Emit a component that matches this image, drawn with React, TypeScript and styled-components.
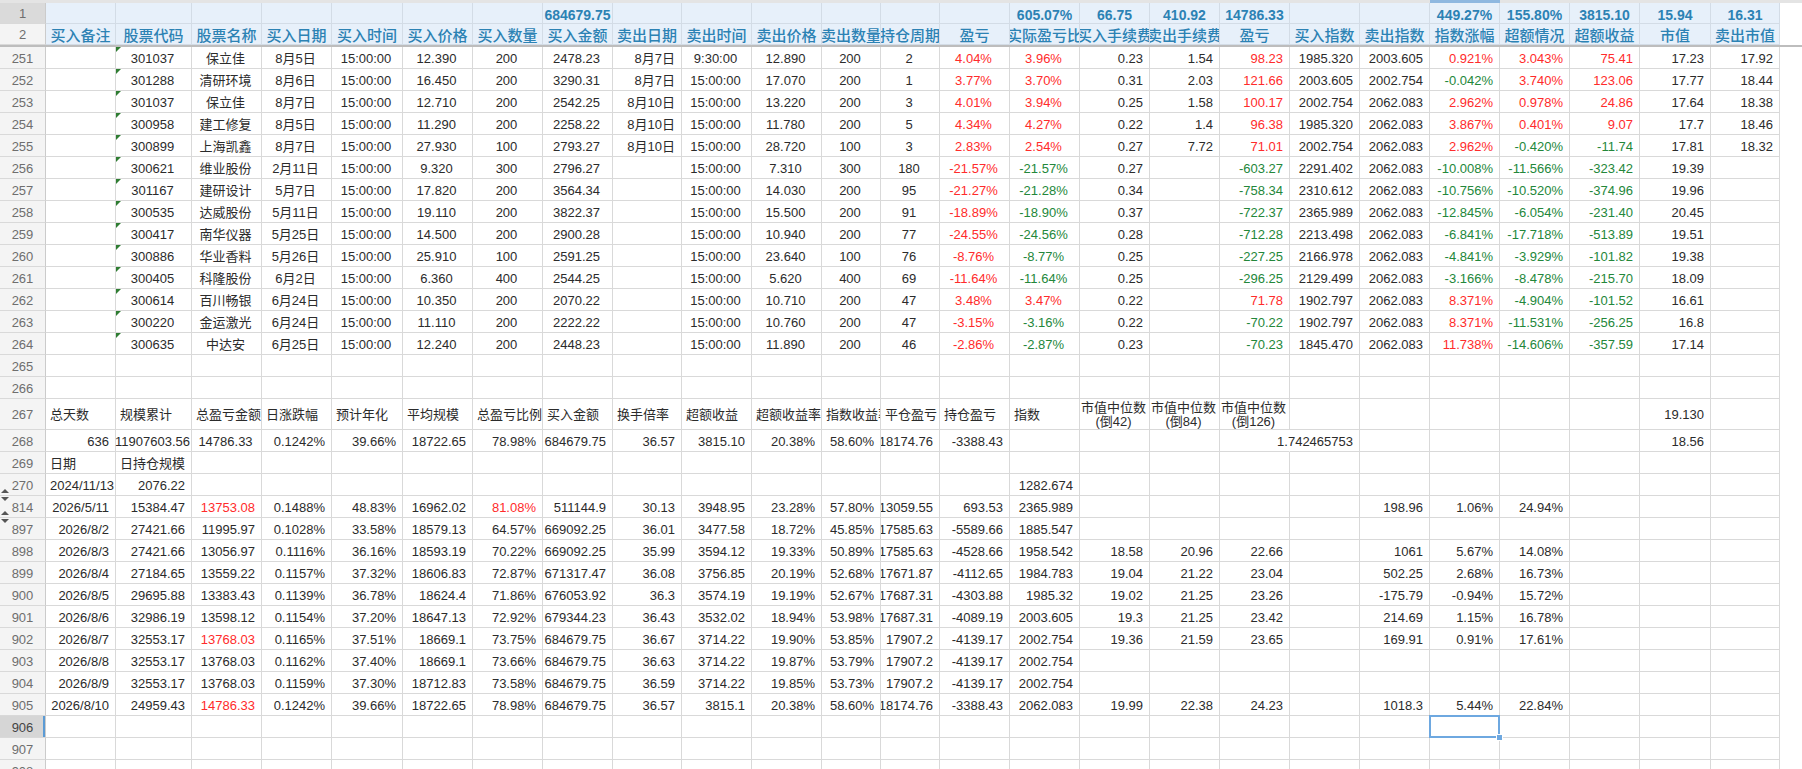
import React from "react";
import styled, { createGlobalStyle, css } from "styled-components";

type Align = "l" | "c" | "r";
type Tone = "red" | "green";
type Kind = "title" | "head" | "body";
type Mark = "up" | "down" | "both";
type HeadState = "dim" | "active";

interface Spec {
  v: string;
  align?: Align;
  tone?: Tone;
  flag?: boolean;
  open?: boolean;
  spill?: boolean;
  tight?: boolean;
  selected?: boolean;
}

// widths of row header + columns A..Y, taken from the sheet
const WIDTHS = [46, 70, 76, 70, 70, 71, 70, 70, 70, 69, 70, 70, 59, 59, 70, 70, 70, 70, 70, 70, 70, 70, 70, 70, 71, 69];
const TEMPLATE = WIDTHS.map((w) => `${w}px`).join(" ") + " 1fr";

const GRID = "#d9d9d9";
const RED = "#ff2b2b";
const GREEN = "#23873a";
const INK = "#2b2b2b";
const TEAL = "#2c82b4";

const GlobalStyle = createGlobalStyle`
  html, body {
    margin: 0;
    padding: 0;
    background: #fff;
  }
  body {
    font-family: "Liberation Sans", Arial, "Noto Sans CJK SC", sans-serif;
    overflow: hidden;
  }
`;

const Sheet = styled.div`
  width: 100%;
  height: 769px;
  overflow: hidden;
  background: #fff;
`;

const Strip = styled.div`
  display: grid;
  grid-template-columns: ${TEMPLATE};
  height: 3px;
  background: #e4e4e4;
`;

const StripCell = styled.div<{ $active?: boolean }>`
  background: ${(p) => (p.$active ? "#8fb8e0" : "#e4e4e4")};
`;

const Row = styled.div<{ $h: number; $divider?: boolean }>`
  display: grid;
  grid-template-columns: ${TEMPLATE};
  box-sizing: border-box;
  height: ${(p) => p.$h}px;
  ${(p) =>
    p.$divider &&
    css`
      border-bottom: 2px solid #bdbdbd;
    `}
`;

const RowHead = styled.div<{ $state?: HeadState; $mark?: Mark }>`
  position: relative;
  box-sizing: border-box;
  display: flex;
  align-items: center;
  justify-content: center;
  padding-top: 1px;
  font-size: 13px;
  color: #6e6e6e;
  background: ${(p) => (p.$state === "dim" ? "#dadada" : p.$state === "active" ? "#d6d6d6" : "#f4f4f4")};
  border-right: 1px solid #cbcbcb;
  border-bottom: 1px solid ${GRID};
  ${(p) =>
    p.$state === "active" &&
    css`
      box-shadow: inset -2px 0 0 #5b9bd5;
      color: #444;
    `}
  ${(p) =>
    (p.$mark === "down" || p.$mark === "both") &&
    css`
      &::before {
        content: "";
        position: absolute;
        top: 1px;
        left: 1px;
        border-left: 4px solid transparent;
        border-right: 4px solid transparent;
        border-top: 4px solid #555;
      }
    `}
  ${(p) =>
    (p.$mark === "up" || p.$mark === "both") &&
    css`
      &::after {
        content: "";
        position: absolute;
        bottom: 2px;
        left: 1px;
        border-left: 4px solid transparent;
        border-right: 4px solid transparent;
        border-bottom: 4px solid #555;
      }
    `}
`;

const Cell = styled.div<{
  $align?: Align;
  $tone?: Tone;
  $kind: Kind;
  $flag?: boolean;
  $open?: boolean;
  $spill?: boolean;
  $tight?: boolean;
  $selected?: boolean;
}>`
  position: relative;
  box-sizing: border-box;
  display: flex;
  align-items: center;
  justify-content: ${(p) => (p.$align === "l" ? "flex-start" : p.$align === "r" ? "flex-end" : "center")};
  padding: ${(p) => (p.$tight ? "2px 1px 0 0" : "2px 6px 0 4px")};
  white-space: nowrap;
  overflow: ${(p) => (p.$spill ? "visible" : "hidden")};
  border-right: 1px solid ${(p) => (p.$open ? "transparent" : GRID)};
  border-bottom: 1px solid ${GRID};
  font-size: 13px;
  color: ${(p) => (p.$tone === "red" ? RED : p.$tone === "green" ? GREEN : INK)};

  span {
    white-space: pre;
    text-align: center;
    line-height: 14px;
  }

  ${(p) =>
    p.$kind !== "body" &&
    css`
      background: #e7f0fa;
      color: ${TEAL};
      border-right-color: #d3dce6;
      border-bottom-color: #d3dce6;
      padding: 1px 0 0;
    `}
  ${(p) =>
    p.$kind === "head" &&
    css`
      font-size: 15px;
      font-weight: 500;
      font-family: "Noto Sans CJK SC", "Liberation Sans", sans-serif;
    `}
  ${(p) =>
    p.$kind === "title" &&
    css`
      font-size: 14px;
      font-weight: 700;
      padding-top: 3px;
    `}
  ${(p) =>
    p.$flag &&
    css`
      &::before {
        content: "";
        position: absolute;
        top: 0;
        left: 0;
        border-top: 5px solid #2f7d32;
        border-right: 5px solid transparent;
      }
    `}
  ${(p) =>
    p.$selected &&
    css`
      overflow: visible;
      &::after {
        content: "";
        position: absolute;
        top: -1px;
        left: -1px;
        right: -1px;
        bottom: -1px;
        border: 2px solid #6ea8e0;
        z-index: 2;
      }
    `}
`;

const Handle = styled.i`
  position: absolute;
  right: -4px;
  bottom: -4px;
  width: 5px;
  height: 5px;
  background: #6ea8e0;
  border: 1px solid #fff;
  z-index: 3;
`;

const Filler = styled.div``;

interface RowProps {
  num: string;
  cells: Spec[];
  height?: number;
  kind?: Kind;
  mark?: Mark;
  state?: HeadState;
  divider?: boolean;
}

const SheetRow = ({ num, cells, height = 22, kind = "body", mark, state, divider }: RowProps) => (
  <Row $h={height} $divider={divider}>
    <RowHead $mark={mark} $state={state}>{num}</RowHead>
    {cells.map((c, i) => (
      <Cell
        key={i}
        $kind={kind}
        $align={c.align}
        $tone={c.tone}
        $flag={c.flag}
        $open={c.open}
        $spill={c.spill}
        $tight={c.tight}
        $selected={c.selected}
      >
        {c.v && <span>{c.v}</span>}
        {c.selected && <Handle />}
      </Cell>
    ))}
    <Filler />
  </Row>
);

const blank = (): Spec[] => Array.from({ length: 25 }, () => ({ v: "" }));

const TITLE: Record<number, string> = {
  7: "684679.75",
  14: "605.07%",
  15: "66.75",
  16: "410.92",
  17: "14786.33",
  20: "449.27%",
  21: "155.80%",
  22: "3815.10",
  23: "15.94",
  24: "16.31",
};

const HEADS = [
  "买入备注", "股票代码", "股票名称", "买入日期", "买入时间", "买入价格", "买入数量", "买入金额",
  "卖出日期", "卖出时间", "卖出价格", "卖出数量", "持仓周期", "盈亏", "实际盈亏比", "买入手续费",
  "卖出手续费", "盈亏", "买入指数", "卖出指数", "指数涨幅", "超额情况", "超额收益", "市值", "卖出市值",
];

const TRADES: string[][] = [
  ["251", "301037", "保立佳", "8月5日", "15:00:00", "12.390", "200", "2478.23", "8月7日", "9:30:00", "12.890", "200", "2", "4.04%", "3.96%", "0.23", "1.54", "98.23", "1985.320", "2003.605", "0.921%", "3.043%", "75.41", "17.23", "17.92"],
  ["252", "301288", "清研环境", "8月6日", "15:00:00", "16.450", "200", "3290.31", "8月7日", "15:00:00", "17.070", "200", "1", "3.77%", "3.70%", "0.31", "2.03", "121.66", "2003.605", "2002.754", "-0.042%", "3.740%", "123.06", "17.77", "18.44"],
  ["253", "301037", "保立佳", "8月7日", "15:00:00", "12.710", "200", "2542.25", "8月10日", "15:00:00", "13.220", "200", "3", "4.01%", "3.94%", "0.25", "1.58", "100.17", "2002.754", "2062.083", "2.962%", "0.978%", "24.86", "17.64", "18.38"],
  ["254", "300958", "建工修复", "8月5日", "15:00:00", "11.290", "200", "2258.22", "8月10日", "15:00:00", "11.780", "200", "5", "4.34%", "4.27%", "0.22", "1.4", "96.38", "1985.320", "2062.083", "3.867%", "0.401%", "9.07", "17.7", "18.46"],
  ["255", "300899", "上海凯鑫", "8月7日", "15:00:00", "27.930", "100", "2793.27", "8月10日", "15:00:00", "28.720", "100", "3", "2.83%", "2.54%", "0.27", "7.72", "71.01", "2002.754", "2062.083", "2.962%", "-0.420%", "-11.74", "17.81", "18.32"],
  ["256", "300621", "维业股份", "2月11日", "15:00:00", "9.320", "300", "2796.27", "", "15:00:00", "7.310", "300", "180", "-21.57%", "-21.57%", "0.27", "", "-603.27", "2291.402", "2062.083", "-10.008%", "-11.566%", "-323.42", "19.39", ""],
  ["257", "301167", "建研设计", "5月7日", "15:00:00", "17.820", "200", "3564.34", "", "15:00:00", "14.030", "200", "95", "-21.27%", "-21.28%", "0.34", "", "-758.34", "2310.612", "2062.083", "-10.756%", "-10.520%", "-374.96", "19.96", ""],
  ["258", "300535", "达威股份", "5月11日", "15:00:00", "19.110", "200", "3822.37", "", "15:00:00", "15.500", "200", "91", "-18.89%", "-18.90%", "0.37", "", "-722.37", "2365.989", "2062.083", "-12.845%", "-6.054%", "-231.40", "20.45", ""],
  ["259", "300417", "南华仪器", "5月25日", "15:00:00", "14.500", "200", "2900.28", "", "15:00:00", "10.940", "200", "77", "-24.55%", "-24.56%", "0.28", "", "-712.28", "2213.498", "2062.083", "-6.841%", "-17.718%", "-513.89", "19.51", ""],
  ["260", "300886", "华业香料", "5月26日", "15:00:00", "25.910", "100", "2591.25", "", "15:00:00", "23.640", "100", "76", "-8.76%", "-8.77%", "0.25", "", "-227.25", "2166.978", "2062.083", "-4.841%", "-3.929%", "-101.82", "19.38", ""],
  ["261", "300405", "科隆股份", "6月2日", "15:00:00", "6.360", "400", "2544.25", "", "15:00:00", "5.620", "400", "69", "-11.64%", "-11.64%", "0.25", "", "-296.25", "2129.499", "2062.083", "-3.166%", "-8.478%", "-215.70", "18.09", ""],
  ["262", "300614", "百川畅银", "6月24日", "15:00:00", "10.350", "200", "2070.22", "", "15:00:00", "10.710", "200", "47", "3.48%", "3.47%", "0.22", "", "71.78", "1902.797", "2062.083", "8.371%", "-4.904%", "-101.52", "16.61", ""],
  ["263", "300220", "金运激光", "6月24日", "15:00:00", "11.110", "200", "2222.22", "", "15:00:00", "10.760", "200", "47", "-3.15%", "-3.16%", "0.22", "", "-70.22", "1902.797", "2062.083", "8.371%", "-11.531%", "-256.25", "16.8", ""],
  ["264", "300635", "中达安", "6月25日", "15:00:00", "12.240", "200", "2448.23", "", "15:00:00", "11.890", "200", "46", "-2.86%", "-2.87%", "0.23", "", "-70.23", "1845.470", "2062.083", "11.738%", "-14.606%", "-357.59", "17.14", ""],
];

// A..Y alignment of the trade block
const TRADE_ALIGN: Align[] = ["l", "c", "c", "c", "c", "c", "c", "c", "r", "c", "c", "c", "c", "c", "c", "r", "r", "r", "r", "r", "r", "r", "r", "r", "r"];
const SIGNED = [14, 17, 20, 21, 22];

const tradeCells = (vals: string[]): Spec[] =>
  ["", ...vals].map((v, i) => {
    let tone: Tone | undefined;
    if (i === 13) tone = "red";
    if (SIGNED.includes(i) && v) tone = v.startsWith("-") ? "green" : "red";
    return { v, align: TRADE_ALIGN[i], tone, flag: i === 1 };
  });

const LABELS = [
  "总天数", "规模累计", "总盈亏金额", "日涨跌幅", "预计年化", "平均规模", "总盈亏比例", "买入金额",
  "换手倍率", "超额收益", "超额收益率", "指数收益率", "平仓盈亏", "持仓盈亏", "指数",
  "市值中位数\n(倒42)", "市值中位数\n(倒84)", "市值中位数\n(倒126)", "", "", "", "", "", "19.130", "",
];

const labelCells = (): Spec[] =>
  LABELS.map((v, i) => ({ v, align: i >= 15 && i <= 17 ? "c" : i === 23 ? "r" : "l" }));

const numberCells = (vals: string[], reds: number[] = []): Spec[] =>
  vals.map((v, i) => ({ v, align: "r", tone: reds.includes(i) ? "red" : undefined }));

const TOTALS = ["636", "11907603.56", "14786.33", "0.1242%", "39.66%", "18722.65", "78.98%", "684679.75", "36.57", "3815.10", "20.38%", "58.60%", "18174.76", "-3388.43", "", "", "", "", "1.742465753", "", "", "", "", "18.56", ""];

const DAILY: { num: string; vals: string[]; reds?: number[]; mark?: Mark }[] = [
  { num: "814", mark: "both", reds: [2, 6], vals: ["2026/5/11", "15384.47", "13753.08", "0.1488%", "48.83%", "16962.02", "81.08%", "511144.9", "30.13", "3948.95", "23.28%", "57.80%", "13059.55", "693.53", "2365.989", "", "", "", "", "198.96", "1.06%", "24.94%", "", "", ""] },
  { num: "897", mark: "down", vals: ["2026/8/2", "27421.66", "11995.97", "0.1028%", "33.58%", "18579.13", "64.57%", "669092.25", "36.01", "3477.58", "18.72%", "45.85%", "17585.63", "-5589.66", "1885.547", "", "", "", "", "", "", "", "", "", ""] },
  { num: "898", vals: ["2026/8/3", "27421.66", "13056.97", "0.1116%", "36.16%", "18593.19", "70.22%", "669092.25", "35.99", "3594.12", "19.33%", "50.89%", "17585.63", "-4528.66", "1958.542", "18.58", "20.96", "22.66", "", "1061", "5.67%", "14.08%", "", "", ""] },
  { num: "899", vals: ["2026/8/4", "27184.65", "13559.22", "0.1157%", "37.32%", "18606.83", "72.87%", "671317.47", "36.08", "3756.85", "20.19%", "52.68%", "17671.87", "-4112.65", "1984.783", "19.04", "21.22", "23.04", "", "502.25", "2.68%", "16.73%", "", "", ""] },
  { num: "900", vals: ["2026/8/5", "29695.88", "13383.43", "0.1139%", "36.78%", "18624.4", "71.86%", "676053.92", "36.3", "3574.19", "19.19%", "52.67%", "17687.31", "-4303.88", "1985.32", "19.02", "21.25", "23.26", "", "-175.79", "-0.94%", "15.72%", "", "", ""] },
  { num: "901", vals: ["2026/8/6", "32986.19", "13598.12", "0.1154%", "37.20%", "18647.13", "72.92%", "679344.23", "36.43", "3532.02", "18.94%", "53.98%", "17687.31", "-4089.19", "2003.605", "19.3", "21.25", "23.42", "", "214.69", "1.15%", "16.78%", "", "", ""] },
  { num: "902", reds: [2], vals: ["2026/8/7", "32553.17", "13768.03", "0.1165%", "37.51%", "18669.1", "73.75%", "684679.75", "36.67", "3714.22", "19.90%", "53.85%", "17907.2", "-4139.17", "2002.754", "19.36", "21.59", "23.65", "", "169.91", "0.91%", "17.61%", "", "", ""] },
  { num: "903", vals: ["2026/8/8", "32553.17", "13768.03", "0.1162%", "37.40%", "18669.1", "73.66%", "684679.75", "36.63", "3714.22", "19.87%", "53.79%", "17907.2", "-4139.17", "2002.754", "", "", "", "", "", "", "", "", "", ""] },
  { num: "904", vals: ["2026/8/9", "32553.17", "13768.03", "0.1159%", "37.30%", "18712.83", "73.58%", "684679.75", "36.59", "3714.22", "19.85%", "53.73%", "17907.2", "-4139.17", "2002.754", "", "", "", "", "", "", "", "", "", ""] },
  { num: "905", reds: [2], vals: ["2026/8/10", "24959.43", "14786.33", "0.1242%", "39.66%", "18722.65", "78.98%", "684679.75", "36.57", "3815.1", "20.38%", "58.60%", "18174.76", "-3388.43", "2062.083", "19.99", "22.38", "24.23", "", "1018.3", "5.44%", "22.84%", "", "", ""] },
];

const titleCells = (): Spec[] => blank().map((c, i) => ({ ...c, v: TITLE[i] ?? "" }));
const headCells = (): Spec[] => HEADS.map((v) => ({ v }));

const totalsCells = (): Spec[] => {
  const cells = numberCells(TOTALS);
  cells[1] = { ...cells[1], tight: true, spill: true };
  cells[2] = { ...cells[2], align: "c" };
  cells[17] = { ...cells[17], open: true };
  cells[18] = { ...cells[18], spill: true };
  return cells;
};

const dayHeadCells = (): Spec[] => {
  const cells = blank();
  cells[0] = { v: "日期", align: "l" };
  cells[1] = { v: "日持仓规模", align: "l" };
  return cells;
};

const firstDayCells = (): Spec[] => {
  const cells = blank();
  cells[0] = { v: "2024/11/13", align: "l" };
  cells[1] = { v: "2076.22", align: "r" };
  cells[14] = { v: "1282.674", align: "r" };
  return cells;
};

const selectedCells = (): Spec[] => {
  const cells = blank();
  cells[20] = { v: "", selected: true };
  return cells;
};

export default function App() {
  return (
    <>
      <GlobalStyle />
      <Sheet>
        <Strip>
          {WIDTHS.map((_, i) => (
            <StripCell key={i} $active={i === 21} />
          ))}
          <StripCell />
        </Strip>
        <SheetRow num="1" kind="title" height={21} state="dim" cells={titleCells()} />
        <SheetRow num="2" kind="head" height={23} divider cells={headCells()} />
        {TRADES.map((t) => (
          <SheetRow key={t[0]} num={t[0]} cells={tradeCells(t.slice(1))} />
        ))}
        <SheetRow num="265" cells={blank()} />
        <SheetRow num="266" cells={blank()} />
        <SheetRow num="267" height={31} cells={labelCells()} />
        <SheetRow num="268" cells={totalsCells()} />
        <SheetRow num="269" cells={dayHeadCells()} />
        <SheetRow num="270" mark="up" cells={firstDayCells()} />
        {DAILY.map((d) => {
          const cells = numberCells(d.vals, d.reds);
          return <SheetRow key={d.num} num={d.num} mark={d.mark} cells={cells} />;
        })}
        <SheetRow num="906" state="active" cells={selectedCells()} />
        <SheetRow num="907" cells={blank()} />
        <SheetRow num="908" cells={blank()} />
      </Sheet>
    </>
  );
}
